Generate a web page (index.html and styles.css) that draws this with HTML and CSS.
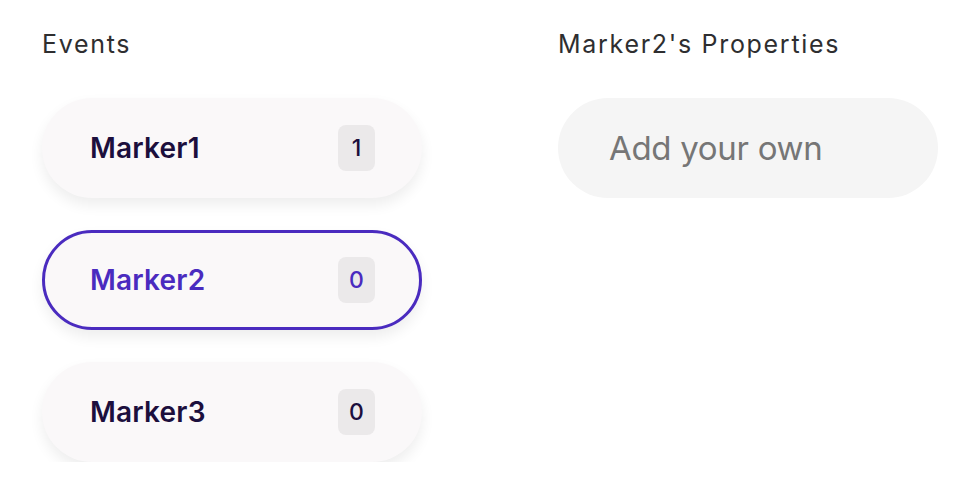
FILE: index.html
```html
<!DOCTYPE html>
<html>
<head>
<meta charset="utf-8">
<link rel="stylesheet" href="styles.css">
</head>
<body>
<div class="page">
  <section class="col">
    <h2 class="heading">Events</h2>
    <div class="list">
      <div class="card"><span class="name">Marker1</span><span class="badge">1</span></div>
      <div class="card active"><span class="name">Marker2</span><span class="badge">0</span></div>
      <div class="card"><span class="name">Marker3</span><span class="badge">0</span></div>
    </div>
  </section>
  <section class="col">
    <h2 class="heading">Marker2's Properties</h2>
    <div class="list">
      <div class="input">Add your own</div>
    </div>
  </section>
</div>
</body>
</html>
```
FILE: styles.css
```css
* { box-sizing: border-box; }
html, body { margin: 0; padding: 0; background: #ffffff; }
body { font-family: Inter, "Noto Sans", sans-serif; }
.page {
  display: flex;
  gap: 136px;
  padding: 28px 0 0 42px;
}
.col { width: 380px; display: flex; flex-direction: column; }
.heading {
  margin: 0;
  font-size: 25px;
  font-weight: 400;
  color: #2e2e30;
  line-height: 32px;
  letter-spacing: 1.7px;
}
.list {
  margin-top: 38px;
  display: flex;
  flex-direction: column;
  gap: 32px;
}
.card {
  height: 100px;
  border-radius: 50px;
  background: #faf8f9;
  box-shadow: 0 7px 14px rgba(0, 0, 0, 0.07);
  display: flex;
  align-items: center;
  justify-content: space-between;
  padding: 0 44px 0 45px;
  border: 3px solid transparent;
}
.card.active { border-color: #4a2bbf; }
.name {
  font-size: 28px;
  font-weight: 600;
  color: #1c0f3d;
  letter-spacing: 0.2px;
}
.card.active .name, .card.active .badge { color: #4a2bbf; }
.badge {
  width: 37px;
  height: 46px;
  border-radius: 8px;
  background: #ebe9ea;
  display: flex;
  align-items: center;
  justify-content: center;
  font-size: 23px;
  font-weight: 500;
  color: #1c0f3d;
}
.input {
  height: 100px;
  border-radius: 50px;
  background: #f5f5f5;
  display: flex;
  align-items: center;
  padding: 0 51px;
  font-size: 33px;
  color: #767676;
  letter-spacing: -0.3px;
}
```
